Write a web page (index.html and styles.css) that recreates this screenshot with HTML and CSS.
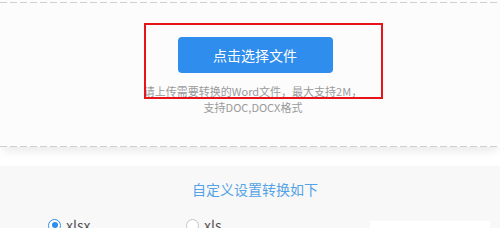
FILE: index.html
```html
<!DOCTYPE html>
<html lang="zh-CN">
<head>
<meta charset="utf-8">
<title>Word转换</title>
<link rel="stylesheet" href="styles.css">
</head>
<body>
<section class="upload">
  <div class="dash"></div>
  <div class="upload-body">
    <button class="pick-btn" type="button">点击选择文件</button>
    <p class="hint">请上传需要转换的Word文件，最大支持2M，<br>支持DOC,DOCX格式</p>
  </div>
  <div class="dash"></div>
  <div class="mark"></div>
</section>
<section class="settings">
  <h2 class="settings-title">自定义设置转换如下</h2>
  <div class="options">
    <label class="opt"><span class="radio checked"></span><span class="opt-text">xlsx</span></label>
    <label class="opt"><span class="radio"></span><span class="opt-text">xls</span></label>
    <div class="side-box"></div>
  </div>
</section>
</body>
</html>
```
FILE: styles.css
```css
html, body {
  margin: 0;
  padding: 0;
}
body {
  width: 500px;
  height: 228px;
  overflow: hidden;
  background: #ffffff;
  font-family: "Noto Sans CJK SC", "Noto Sans", sans-serif;
}
.upload {
  position: relative;
  background: #fcfcfc;
  padding-top: 2px;
  box-shadow: 0 6px 10px -3px rgba(0, 0, 0, 0.10);
}
.dash {
  height: 1px;
  background: repeating-linear-gradient(to right, #cfcfcf 0 7px, transparent 7px 10px);
}
.upload-body {
  display: flex;
  flex-direction: column;
  align-items: center;
  padding-top: 34px;
  height: 143px;
  box-sizing: border-box;
}
.pick-btn {
  width: 155px;
  height: 36px;
  margin-left: 10px;
  border: none;
  border-radius: 4px;
  background: #2f8ded;
  color: #ffffff;
  font-family: "Noto Sans CJK SC", sans-serif;
  font-size: 14px;
  padding: 0;
}
.hint {
  margin: 10px 0 0;
  padding-left: 6px;
  font-size: 11px;
  line-height: 16px;
  color: #9a9a9a;
  text-align: center;
  white-space: nowrap;
}
.mark {
  position: absolute;
  left: 144px;
  top: 23px;
  width: 235px;
  height: 72px;
  border: 2px solid #e8141a;
}
.settings {
  margin-top: 19px;
  background: #f8f8f8;
  height: 62px;
  padding-top: 13px;
}
.settings-title {
  margin: 0;
  padding-left: 10px;
  font-size: 14px;
  line-height: 20px;
  font-weight: normal;
  color: #55a3e6;
  text-align: center;
}
.options {
  display: flex;
  align-items: flex-start;
  padding-left: 48px;
  margin-top: 17px;
}
.opt {
  display: flex;
  align-items: center;
  width: 138px;
  height: 18px;
}
.radio {
  width: 11px;
  height: 11px;
  border: 1px solid #c4c4c4;
  border-radius: 50%;
  background: #ffffff;
  position: relative;
  flex: none;
}
.radio.checked {
  border-color: #2f8ded;
}
.radio.checked::after {
  content: "";
  position: absolute;
  left: 2.5px;
  top: 2.5px;
  width: 6px;
  height: 6px;
  border-radius: 50%;
  background: #2f8ded;
}
.opt-text {
  margin-left: 5px;
  font-size: 14px;
  color: #555555;
  line-height: 18px;
}
.side-box {
  margin-left: auto;
  margin-right: 10px;
  margin-top: 5px;
  width: 120px;
  height: 20px;
  background: #ffffff;
}
```
